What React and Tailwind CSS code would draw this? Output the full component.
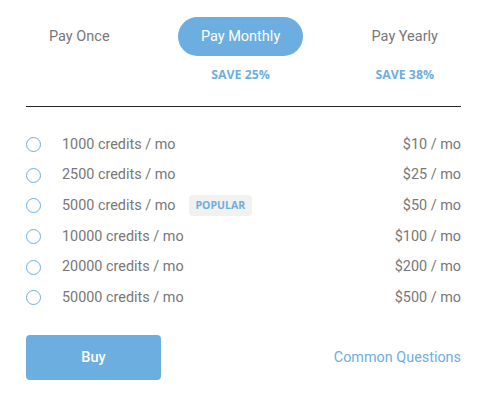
import { useState } from 'react';

const PLANS = [
  { credits: 1000, price: 10 },
  { credits: 2500, price: 25 },
  { credits: 5000, price: 50, popular: true },
  { credits: 10000, price: 100 },
  { credits: 20000, price: 200 },
  { credits: 50000, price: 500 },
];

const TABS = [
  { id: 'once', label: 'Pay Once', save: null },
  { id: 'monthly', label: 'Pay Monthly', save: 'SAVE 25%' },
  { id: 'yearly', label: 'Pay Yearly', save: 'SAVE 38%' },
];

export default function App() {
  const [tab, setTab] = useState('monthly');
  const [plan, setPlan] = useState(null);

  return (
    <div className="w-[502px] h-[401px] bg-white pl-[26px] pr-[41px] pt-[17px] font-['Roboto',sans-serif] text-[#777]">
      {/* Billing period tabs */}
      <div className="flex justify-between">
        {TABS.map((t) => (
          <div key={t.id} className="flex flex-col items-center">
            <button
              onClick={() => setTab(t.id)}
              className={`h-[39px] px-[23px] rounded-full text-[14.5px] leading-[20px] cursor-pointer ${tab === t.id ? 'bg-[#6daee0] text-white' : 'text-[#777]'}`}
            >
              {t.label}
            </button>
            <div className="h-[40px] pt-[11px] text-[12.3px] leading-[16px] font-bold text-[#6daee0] font-['Open_Sans',sans-serif]">
              {t.save}
            </div>
          </div>
        ))}
      </div>

      <div className="h-px bg-[#2a2530] mt-[10px]" />

      {/* Plan list */}
      <div className="mt-[22px] flex flex-col">
        {PLANS.map((p) => (
          <label key={p.credits} className="h-[30.7px] flex items-center cursor-pointer text-[14.4px]">
            <span className="w-[15px] h-[15px] rounded-full border-[1.5px] border-[#6daee0] flex items-center justify-center shrink-0">
              {plan === p.credits && <span className="w-[7px] h-[7px] rounded-full bg-[#6daee0]" />}
            </span>
            <input type="radio" name="plan" className="hidden" checked={plan === p.credits} onChange={() => setPlan(p.credits)} />
            <span className="ml-[21px]">{p.credits} credits / mo</span>
            {p.popular && (
              <span className="ml-[13px] px-[7px] h-[21px] flex items-center rounded-[4px] bg-[#f1f1f1] text-[#6daee0] text-[10.5px] font-bold font-['Open_Sans',sans-serif]">
                POPULAR
              </span>
            )}
            <span className="ml-auto">${p.price} / mo</span>
          </label>
        ))}
      </div>

      <div className="mt-[22px] flex items-center justify-between">
        <button className="w-[135px] h-[45px] rounded-[4px] bg-[#6daee0] text-white text-[14.5px] font-medium cursor-pointer">
          Buy
        </button>
        <a href="#" className="text-[14.4px] text-[#6daee0]">Common Questions</a>
      </div>
    </div>
  );
}
